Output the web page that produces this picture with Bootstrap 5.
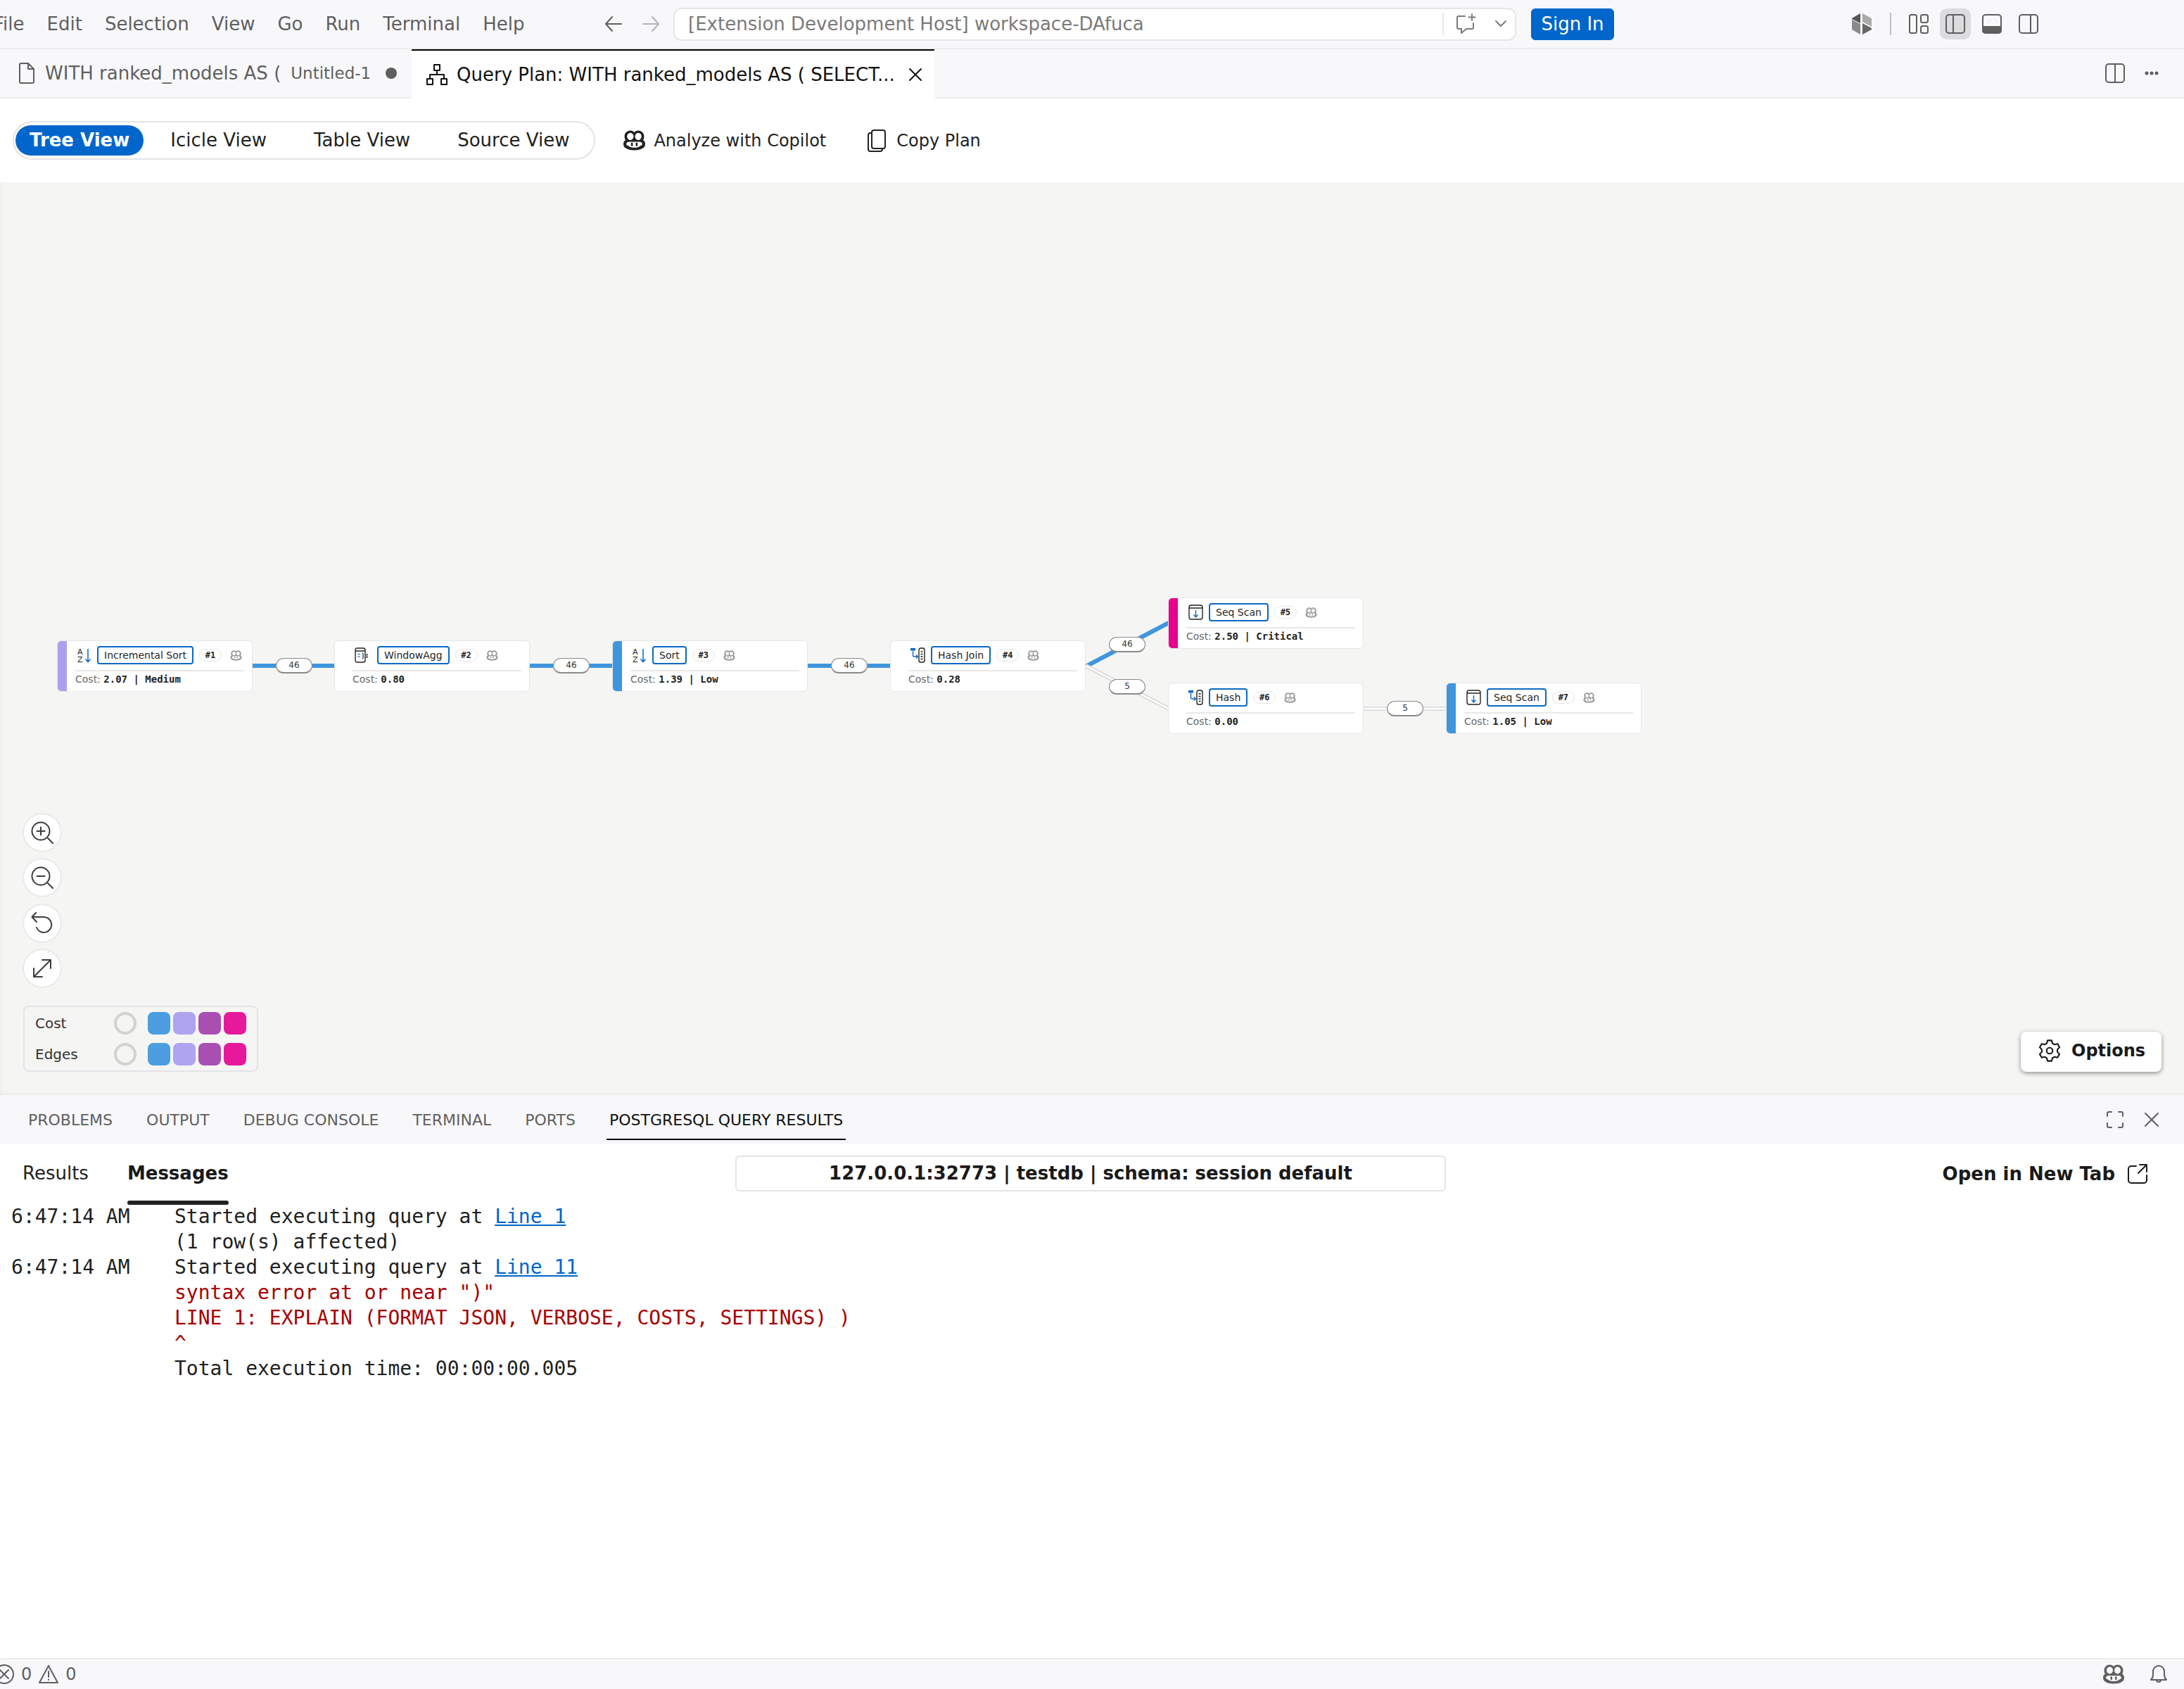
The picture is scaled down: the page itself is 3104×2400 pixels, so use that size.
<!DOCTYPE html>
<html lang="en">
<head>
<meta charset="UTF-8" />
<title>Query Plan</title>
<link rel="stylesheet" href="https://cdn.jsdelivr.net/npm/bootstrap@5.3.2/dist/css/bootstrap.min.css" />
<style>
  html, body { height: 2400px; overflow: hidden; }
  body { font-family: "DejaVu Sans", sans-serif; font-size: 26px; color: #1f1f1f; background: #fff; }
  svg { display: block; flex: none; }
  .ico { fill: none; stroke: currentColor; stroke-width: 2; stroke-linecap: round; stroke-linejoin: round; }

  .app { height: 2400px; }
  .title-bar { height: 70px; background: #f8f8fb; border-bottom: 2px solid #ececee; color: #5f5f5f; flex: none; }
  .menu-list { margin-left: -9px; gap: 32px; width: 868px; }
  .nav-arrow { margin-right: 27px; }
  .nav-next { color: #b5b5b5; }
  .cmd-center { width: 1198px; height: 47px; margin-left: 19px; background: #fff; border: 2px solid #e6e6e8; border-radius: 12px; padding: 0 11px 0 19px; color: #7a7a7a; }
  .cmd-sep { width: 2px; height: 32px; background: #e6e6e8; margin-left: auto; margin-right: 16px; }
  .btn-signin { --bs-btn-padding-x: 0; --bs-btn-padding-y: 0; --bs-btn-font-size: 26px; --bs-btn-bg: #0066cc; --bs-btn-border-color: #0066cc; --bs-btn-color: #fff; --bs-btn-border-radius: 6px; width: 118px; height: 45px; margin-left: 21px; }
  .layout-icons { margin-left: 338px; }
  .lay-sep { width: 2px; height: 32px; background: #bdbdbd; margin: 0 25px 0 26px; }
  .lay-btn { width: 44px; height: 44px; border-radius: 10px; margin-right: 8px; }
  .lay-first { margin-left: -8px; }
  .lay-on { background: #dcdcde; }

  .tab-row { height: 70px; background: #f8f8fb; border-bottom: 2px solid #ececee; flex: none; }
  .ed-tab { height: 68px; color: #5f5f5f; white-space: nowrap; }
  .ed-tab-a { width: 585px; padding-left: 27px; }
  .ed-tab-a .tab-text { margin-left: 15px; }
  .tab-sub { font-size: 23px; margin-left: 14px; }
  .tab-dot { width: 16px; height: 16px; border-radius: 50%; background: #5f5f5f; margin-left: 21px; }
  .ed-tab-b { width: 743px; height: 70px; padding-left: 21px; background: #fff; border-top: 2px solid #000; color: #111; }
  .ed-tab-b .tab-text { margin-left: 13px; }
  .tab-close { margin-left: 19px; }
  .tab-actions { margin-left: auto; margin-right: 36px; color: #5f5f5f; gap: 28px; }

  .tool-bar { height: 119px; flex: none; padding-left: 18px; background: #fff; }
  .view-pills { height: 55px; border: 2px solid #e4e4e4; border-radius: 28px; padding: 0 15px 0 2px; gap: 27px; }
  .view-pill { padding: 0 20px; color: #1f1f1f; white-space: nowrap; }
  .view-on { height: 43px; border-radius: 22px; background: #0066cc; color: #fff; font-weight: 700; margin-right: -9px; }
  .tool-act { color: #222; white-space: nowrap; gap: 11px; font-size: 24px; }
  .act-one { margin-left: 39px; }
  .act-two { margin-left: 59px; gap: 15px; }

  .plan-canvas { height: 1297px; flex: none; background: #f5f5f3; box-shadow: inset 0 -6px 6px -6px rgba(0,0,0,.08), inset 6px 0 6px -6px rgba(0,0,0,.06); }
  .edge-layer { position: absolute; left: 0; top: -1px; }
  .plan-node { position: absolute; width: 278px; height: 73px; background: #fff; border: 1px solid #e6e6e6; border-radius: 6px; overflow: hidden; display: flex; }
  .n1 { left: 81px; top: 651px; }
  .n2 { left: 475px; top: 651px; }
  .n3 { left: 870px; top: 651px; }
  .n4 { left: 1265px; top: 651px; }
  .n5 { left: 1660px; top: 590px; }
  .n6 { left: 1660px; top: 711px; }
  .n7 { left: 2055px; top: 711px; }
  .cost-bar { width: 13px; flex: none; }
  .bar-low { background: #3f96dd; }
  .bar-med { background: #aaa0ee; }
  .bar-crit { background: #e6008c; }
  .node-body { flex: 1; padding: 7px 11px 0 12px; min-width: 0; }
  .node-head { height: 33px; padding-left: 3px; padding-bottom: 7px; gap: 8px; }
  .node-head svg.kind { color: #222; }
  .op-label { height: 26px; padding: 0 8px; border: 2px solid #0a69c6; border-radius: 4px; font-size: 14px; line-height: 22px; color: #1f1f1f; white-space: nowrap; }
  .id-pill { width: 32px; height: 18px; border: 1px solid #e6e6e6; border-radius: 9px; font: 700 12px/16px "DejaVu Sans Mono", monospace; color: #222; text-align: center; }
  .node-copilot { color: #999; margin-left: 4px; }
  .node-cost { border-top: 2px solid #e8e8e8; margin-top: 1px; padding-top: 1px; font-size: 14px; line-height: 20px; color: #666; white-space: nowrap; }
  .node-cost b { font: 700 14px/20px "DejaVu Sans Mono", monospace; color: #222; }

  .edge-pill { position: absolute; width: 52px; height: 22px; background: #fff; border: 1px solid #8a8a8a; border-bottom-width: 2px; border-radius: 11px; font-size: 12px; line-height: 19px; text-align: center; color: #333; }
  .p1 { left: 392px; top: 676px; }
  .p2 { left: 786px; top: 676px; }
  .p3 { left: 1181px; top: 676px; }
  .p4 { left: 1576px; top: 646px; }
  .p5 { left: 1576px; top: 706px; }
  .p6 { left: 1971px; top: 737px; }

  .zoom-stack { position: absolute; left: 34px; top: 898px; gap: 12.3px; }
  .zoom-btn { width: 52px; height: 52px; border-radius: 50%; background: #fff; box-shadow: 0 0 3px rgba(0,0,0,.18); color: #3c3c3c; }
  .legend-box { position: absolute; left: 33px; top: 1170px; width: 334px; height: 94px; border: 2px solid #e4e4e8; border-radius: 8px; padding: 7px 5px 0 15px; font-size: 20px; color: #333; gap: 12px; }
  .legend-row { height: 32px; }
  .legend-name { width: 112px; }
  .legend-radio { width: 32px; height: 32px; border: 4px solid #d2d2d2; border-radius: 50%; margin-right: 16px; }
  .swatch { width: 32px; height: 32px; border-radius: 8px; margin-right: 4px; }
  .sw-1 { background: #4c9ee0; }
  .sw-2 { background: #aea4f0; }
  .sw-3 { background: #a94fb2; }
  .sw-4 { background: #e6199a; }
  .options-btn { position: absolute; left: 2872px; top: 1207px; width: 200px; height: 57px; background: #fff; border-radius: 8px; box-shadow: 0 2px 6px rgba(0,0,0,.42); font-size: 24px; font-weight: 700; color: #1a1a1a; padding: 0 0 3px 24px; gap: 14px; }

  .panel-bar { height: 70px; flex: none; background: #f8f8fb; padding-left: 40px; font-size: 22px; color: #5f5f5f; gap: 48px; }
  .panel-tab { white-space: nowrap; }
  .panel-on { color: #111; box-shadow: 0 2px 0 0 #000; padding: 0 4px 10px; margin: 10px -4px 0; }
  .panel-right { margin-left: auto; margin-right: 36px; gap: 30px; }

  .results-bar { height: 84px; flex: none; padding-left: 32px; }
  .res-tab { height: 84px; line-height: 82px; white-space: nowrap; color: #222; }
  .res-on { font-weight: 700; margin-left: 55px; position: relative; color: #1a1a1a; }
  .res-on::after { content: ""; position: absolute; left: 0; right: 0; bottom: -2px; height: 6px; border-radius: 3px; background: #222; }
  .server-box { position: absolute; left: 1045px; top: 16px; width: 1010px; height: 51px; border: 2px solid #e4e4e4; border-radius: 6px; font-weight: 700; color: #1a1a1a; white-space: nowrap; }
  .new-tab { margin-left: auto; margin-right: 52px; font-weight: 700; color: #1a1a1a; gap: 18px; white-space: nowrap; }

  .msg-list { padding: 1px 0 0 16px; font: 28px/36px "DejaVu Sans Mono", monospace; color: #1f1f1f; flex: 1; }
  .msg-time { width: 232px; flex: none; }
  .msg-err { color: #a80000; }
  .msg-list a { color: #0066cc; }

  .status-bar { height: 44px; flex: none; background: #f8f8fb; border-top: 2px solid #ececee; color: #5f5f5f; font-size: 24px; }
  .status-left { margin-left: -8px; gap: 10px; }
  .status-right { margin-left: auto; margin-right: 24px; gap: 36px; }
</style>
</head>
<body>
<svg class="d-none" xmlns="http://www.w3.org/2000/svg">
  <symbol id="copilot" viewBox="0 0 32 28">
    <path fill="currentColor" fill-rule="evenodd" d="M16 27.500c-6 0-10-1-12-3-2-1-3-3-3-6 0-2 1-4 3-5-1-1-1.500-2.500-1.500-5C2.500 4 6 .5 10.500 .5c2.500 0 4.500 1 5.500 2.500 1-1.500 3-2.500 5.500-2.500C26 .5 29.500 4 29.500 8.500c0 2.500-.5 4-1.500 5 2 1 3 3 3 5 0 3-1 5-3 6-2 2-6 3-12 3zM6 8.500a4.500 5 0 1 0 9 0a4.500 5 0 1 0-9 0zM17 8.500a4.500 5 0 1 0 9 0a4.500 5 0 1 0-9 0zM9 16h14c2 0 4 1 4 3 0 1-1 2-2 2-2 2-5 3-9 3s-7-1-9-3c-1 0-2-1-2-2 0-2 2-3 4-3z"/>
    <rect x="11.500" y="17" width="2.500" height="5" rx="1.200" fill="currentColor"/>
    <rect x="18" y="17" width="2.500" height="5" rx="1.200" fill="currentColor"/>
  </symbol>
  <symbol id="sort-az" viewBox="0 0 20 21">
    <text x="0" y="9" font-family="DejaVu Sans, sans-serif" font-size="11" fill="#222">A</text>
    <text x="0" y="20" font-family="DejaVu Sans, sans-serif" font-size="11" fill="#222">Z</text>
    <path d="M15 1v18M11.500 15.500 15 19.500l3.500-4" fill="none" stroke="#0a69c6" stroke-width="1.500"/>
  </symbol>
  <symbol id="win-agg" viewBox="0 0 20 22">
    <rect x="1" y="1" width="14" height="20" rx="2.500" fill="none" stroke="#222" stroke-width="1.400"/>
    <path d="M1 5h14" stroke="#222" stroke-width="1.400"/>
    <path d="M4 9.500h4M4 13h4" stroke="#0a69c6" stroke-width="1.200"/>
    <path d="M11 8c1.500 0 1 2 1 3 0 1 1 1 1 1s-1 0-1 1c0 1 .5 3-1 3" fill="none" stroke="#222" stroke-width="1.200"/>
    <path d="M16 10h3M16 14h3M17.500 10v4" stroke="#222" stroke-width="1"/>
  </symbol>
  <symbol id="hash-op" viewBox="0 0 21 22">
    <rect x="0" y="1" width="7" height="3.500" fill="#0a69c6"/>
    <path d="M3.500 5v6c0 1 1 2 2 2h5M8 10.500l2.500 2.500L8 15.500" fill="none" stroke="#0a69c6" stroke-width="1.400"/>
    <rect x="12" y="1" width="8" height="20" rx="2.500" fill="none" stroke="#222" stroke-width="1.400"/>
    <path d="M14.500 6h3M14.500 9.500h3M14.500 13h3M14.500 16.500h3" stroke="#222" stroke-width="1.300"/>
  </symbol>
  <symbol id="seq-scan" viewBox="0 0 21 22">
    <rect x="1" y="1" width="19" height="20" rx="3" fill="none" stroke="#222" stroke-width="1.400"/>
    <path d="M1 5h19" stroke="#222" stroke-width="1.400"/>
    <path d="M10.500 8v10M7.500 14.500l3 3.500 3-3.500" fill="none" stroke="#0a69c6" stroke-width="1.400"/>
  </symbol>
</svg>

<div class="app d-flex flex-column">
  <!-- title bar -->
  <header class="title-bar d-flex align-items-center">
    <div class="menu-list d-flex">
      <span>File</span><span>Edit</span><span>Selection</span><span>View</span><span>Go</span><span>Run</span><span>Terminal</span><span>Help</span>
    </div>
    <svg class="ico nav-arrow" width="26" height="28" viewBox="0 0 26 28"><path d="M24 14H2M11 4 2 14l9 10"/></svg>
    <svg class="ico nav-next" width="26" height="28" viewBox="0 0 26 28"><path d="M2 14h22M15 4l9 10-9 10"/></svg>
    <div class="cmd-center d-flex align-items-center">
      <span>[Extension Development Host] workspace-DAfuca</span>
      <span class="cmd-sep"></span>
      <svg class="ico" width="32" height="30" viewBox="0 0 32 30"><path d="M14 4H5a2 2 0 0 0-2 2v14a2 2 0 0 0 2 2h4v6l7-6h8a2 2 0 0 0 2-2v-6"/><path d="M24 1v9M19.500 5.500h9" stroke-width="1.800"/></svg>
      <svg class="ico ms-4" width="18" height="12" viewBox="0 0 18 12"><path d="m2 2 7 7 7-7"/></svg>
    </div>
    <button type="button" class="btn btn-signin">Sign In</button>
    <div class="layout-icons d-flex align-items-center">
      <svg width="28" height="30" viewBox="0 0 28 30"><polygon points="0,7 12,0 12,14 0,8" fill="#555"/><polygon points="0,9 12,15 12,30 0,23" fill="#8a8a8a"/><polygon points="15,0 28,7 28,19 15,12" fill="#aaa"/><polygon points="15,14 28,21 28,23 15,30" fill="#666"/></svg>
      <span class="lay-sep"></span>
      <span class="lay-btn lay-first d-flex align-items-center justify-content-center">
        <svg class="ico" width="28" height="28" viewBox="0 0 28 28"><rect x="1" y="1" width="10" height="26" rx="2.500"/><rect x="17" y="1" width="10" height="11" rx="2.500"/><rect x="17" y="17" width="10" height="10" rx="2.500"/></svg>
      </span>
      <span class="lay-btn lay-on d-flex align-items-center justify-content-center">
        <svg class="ico" width="28" height="28" viewBox="0 0 28 28"><rect x="1" y="1" width="26" height="26" rx="4"/><path d="M11 1v26"/></svg>
      </span>
      <span class="lay-btn d-flex align-items-center justify-content-center">
        <svg class="ico" width="28" height="28" viewBox="0 0 28 28"><rect x="1" y="1" width="26" height="26" rx="4"/><path d="M1 18h26v5a4 4 0 0 1-4 4H5a4 4 0 0 1-4-4z" fill="currentColor"/></svg>
      </span>
      <span class="lay-btn d-flex align-items-center justify-content-center">
        <svg class="ico" width="28" height="28" viewBox="0 0 28 28"><rect x="1" y="1" width="26" height="26" rx="4"/><path d="M17 1v26"/></svg>
      </span>
    </div>
  </header>

  <!-- editor tabs -->
  <div class="tab-row d-flex align-items-start">
    <div class="ed-tab ed-tab-a d-flex align-items-center">
      <svg class="ico" width="22" height="30" viewBox="0 0 22 30"><path d="M3 1h10l8 8v18a2 2 0 0 1-2 2H3a2 2 0 0 1-2-2V3a2 2 0 0 1 2-2zM13 1v8h8"/></svg>
      <span class="tab-text">WITH ranked_models AS (</span>
      <span class="tab-sub">Untitled-1</span>
      <span class="tab-dot"></span>
    </div>
    <div class="ed-tab ed-tab-b d-flex align-items-center">
      <svg class="ico" width="30" height="30" viewBox="0 0 30 30"><rect x="11" y="1" width="8" height="8"/><rect x="1" y="21" width="8" height="8"/><rect x="21" y="21" width="8" height="8"/><path d="M15 9v6M5 21v-6h20v6"/></svg>
      <span class="tab-text">Query Plan: WITH ranked_models AS ( SELECT...</span>
      <svg class="ico tab-close" width="20" height="20" viewBox="0 0 20 20"><path d="m2 2 16 16M18 2 2 18"/></svg>
    </div>
    <div class="tab-actions d-flex align-items-center align-self-center">
      <svg class="ico" width="28" height="28" viewBox="0 0 28 28"><rect x="1" y="1" width="26" height="26" rx="4"/><path d="M14 1v26"/></svg>
      <svg width="20" height="6" viewBox="0 0 20 6" fill="currentColor"><circle cx="3" cy="3" r="2.500"/><circle cx="10" cy="3" r="2.500"/><circle cx="17" cy="3" r="2.500"/></svg>
    </div>
  </div>

  <!-- view switch -->
  <div class="tool-bar d-flex align-items-center">
    <div class="view-pills d-flex align-items-center">
      <span class="view-pill view-on d-flex align-items-center">Tree View</span>
      <span class="view-pill">Icicle View</span>
      <span class="view-pill">Table View</span>
      <span class="view-pill">Source View</span>
    </div>
    <span class="tool-act act-one d-flex align-items-center"><svg width="33" height="29"><use href="#copilot"/></svg>Analyze with Copilot</span>
    <span class="tool-act act-two d-flex align-items-center">
      <svg class="ico" width="26" height="32" viewBox="0 0 26 32"><rect x="6" y="1" width="19" height="26" rx="3"/><path d="M6 5H4a3 3 0 0 0-3 3v20a3 3 0 0 0 3 3h14a3 3 0 0 0 3-3v-1"/></svg>
      Copy Plan
    </span>
  </div>

  <!-- plan diagram -->
  <main class="plan-canvas position-relative">
    <svg class="edge-layer" width="3104" height="1298" viewBox="0 0 3104 1298">
      <g stroke="#3f96dd" stroke-width="6">
        <path d="M358 688H476M753 688H871M1148 688H1266"/>
        <path d="M1543 689 1661 627"/>
      </g>
      <g stroke="#dcdcdc" stroke-width="6">
        <path d="M1543 688 1661 749M1938 749H2056"/>
      </g>
      <g stroke="#fff" stroke-width="2.500">
        <path d="M1543 688 1661 749M1938 749H2056"/>
      </g>
    </svg>

    <div class="plan-node n1">
      <span class="cost-bar bar-med"></span>
      <div class="node-body">
        <div class="node-head d-flex align-items-center">
          <svg class="kind" width="20" height="21"><use href="#sort-az"/></svg>
          <span class="op-label">Incremental Sort</span>
          <span class="id-pill">#1</span>
          <svg class="node-copilot" width="17" height="15"><use href="#copilot"/></svg>
        </div>
        <div class="node-cost">Cost: <b>2.07 | Medium</b></div>
      </div>
    </div>
    <div class="plan-node n2">
      <span class="cost-bar"></span>
      <div class="node-body">
        <div class="node-head d-flex align-items-center">
          <svg class="kind" width="20" height="22"><use href="#win-agg"/></svg>
          <span class="op-label ms-1">WindowAgg</span>
          <span class="id-pill">#2</span>
          <svg class="node-copilot" width="17" height="15"><use href="#copilot"/></svg>
        </div>
        <div class="node-cost">Cost: <b>0.80</b></div>
      </div>
    </div>
    <div class="plan-node n3">
      <span class="cost-bar bar-low"></span>
      <div class="node-body">
        <div class="node-head d-flex align-items-center">
          <svg class="kind" width="20" height="21"><use href="#sort-az"/></svg>
          <span class="op-label">Sort</span>
          <span class="id-pill">#3</span>
          <svg class="node-copilot" width="17" height="15"><use href="#copilot"/></svg>
        </div>
        <div class="node-cost">Cost: <b>1.39 | Low</b></div>
      </div>
    </div>
    <div class="plan-node n4">
      <span class="cost-bar"></span>
      <div class="node-body">
        <div class="node-head d-flex align-items-center">
          <svg class="kind" width="21" height="22"><use href="#hash-op"/></svg>
          <span class="op-label">Hash Join</span>
          <span class="id-pill">#4</span>
          <svg class="node-copilot" width="17" height="15"><use href="#copilot"/></svg>
        </div>
        <div class="node-cost">Cost: <b>0.28</b></div>
      </div>
    </div>
    <div class="plan-node n5">
      <span class="cost-bar bar-crit"></span>
      <div class="node-body">
        <div class="node-head d-flex align-items-center">
          <svg class="kind" width="21" height="22"><use href="#seq-scan"/></svg>
          <span class="op-label">Seq Scan</span>
          <span class="id-pill">#5</span>
          <svg class="node-copilot" width="17" height="15"><use href="#copilot"/></svg>
        </div>
        <div class="node-cost">Cost: <b>2.50 | Critical</b></div>
      </div>
    </div>
    <div class="plan-node n6">
      <span class="cost-bar"></span>
      <div class="node-body">
        <div class="node-head d-flex align-items-center">
          <svg class="kind" width="21" height="22"><use href="#hash-op"/></svg>
          <span class="op-label">Hash</span>
          <span class="id-pill">#6</span>
          <svg class="node-copilot" width="17" height="15"><use href="#copilot"/></svg>
        </div>
        <div class="node-cost">Cost: <b>0.00</b></div>
      </div>
    </div>
    <div class="plan-node n7">
      <span class="cost-bar bar-low"></span>
      <div class="node-body">
        <div class="node-head d-flex align-items-center">
          <svg class="kind" width="21" height="22"><use href="#seq-scan"/></svg>
          <span class="op-label">Seq Scan</span>
          <span class="id-pill">#7</span>
          <svg class="node-copilot" width="17" height="15"><use href="#copilot"/></svg>
        </div>
        <div class="node-cost">Cost: <b>1.05 | Low</b></div>
      </div>
    </div>

    <span class="edge-pill p1">46</span>
    <span class="edge-pill p2">46</span>
    <span class="edge-pill p3">46</span>
    <span class="edge-pill p4">46</span>
    <span class="edge-pill p5">5</span>
    <span class="edge-pill p6">5</span>

    <div class="zoom-stack d-flex flex-column">
      <span class="zoom-btn d-flex align-items-center justify-content-center">
        <svg class="ico" width="32" height="32" viewBox="0 0 32 32"><circle cx="14" cy="14" r="12.500"/><path d="M24 24l7 7M8.500 14h11M14 8.500v11"/></svg>
      </span>
      <span class="zoom-btn d-flex align-items-center justify-content-center">
        <svg class="ico" width="32" height="32" viewBox="0 0 32 32"><circle cx="14" cy="14" r="12.500"/><path d="M24 24l7 7M8.500 14h11"/></svg>
      </span>
      <span class="zoom-btn d-flex align-items-center justify-content-center">
        <svg class="ico" width="32" height="32" viewBox="0 0 32 32"><path d="M2 7h16a11 11 0 1 1-10 15M7 1 1.500 7 8 14"/></svg>
      </span>
      <span class="zoom-btn d-flex align-items-center justify-content-center">
        <svg class="ico" width="32" height="32" viewBox="0 0 32 32"><path d="M4 28 28 4M4 16v12h12M16 4h12v12"/></svg>
      </span>
    </div>

    <div class="legend-box d-flex flex-column">
      <div class="legend-row d-flex align-items-center">
        <span class="legend-name">Cost</span><span class="legend-radio"></span>
        <span class="swatch sw-1"></span><span class="swatch sw-2"></span><span class="swatch sw-3"></span><span class="swatch sw-4"></span>
      </div>
      <div class="legend-row d-flex align-items-center">
        <span class="legend-name">Edges</span><span class="legend-radio"></span>
        <span class="swatch sw-1"></span><span class="swatch sw-2"></span><span class="swatch sw-3"></span><span class="swatch sw-4"></span>
      </div>
    </div>

    <div class="options-btn d-flex align-items-center">
      <svg class="ico" width="34" height="34" viewBox="0 0 32 32"><path d="M12.100 6.300 13.300 2.250H18.700L19.900 6.300 22.500 7.700 26.600 6.800 29.200 11.400 26.400 14.500V17.500L29.200 20.600 26.600 25.200 22.500 24.300 19.900 25.700 18.700 29.750H13.300L12.100 25.700 9.500 24.300 5.400 25.200 2.800 20.600 5.600 17.500V14.500L2.800 11.400 5.400 6.800 9.500 7.700z"/><circle cx="16" cy="16" r="4"/></svg>
      Options
    </div>
  </main>

  <!-- bottom panel -->
  <div class="panel-bar d-flex align-items-center">
    <span class="panel-tab">PROBLEMS</span>
    <span class="panel-tab">OUTPUT</span>
    <span class="panel-tab">DEBUG CONSOLE</span>
    <span class="panel-tab">TERMINAL</span>
    <span class="panel-tab">PORTS</span>
    <span class="panel-tab panel-on">POSTGRESQL QUERY RESULTS</span>
    <div class="panel-right d-flex align-items-center">
      <svg class="ico" width="24" height="24" viewBox="0 0 24 24"><path d="M1 7V3a2 2 0 0 1 2-2h4M17 1h4a2 2 0 0 1 2 2v4M23 17v4a2 2 0 0 1-2 2h-4M7 23H3a2 2 0 0 1-2-2v-4"/></svg>
      <svg class="ico" width="20" height="20" viewBox="0 0 20 20"><path d="m1 1 18 18M19 1 1 19"/></svg>
    </div>
  </div>

  <div class="results-bar d-flex align-items-center position-relative">
    <span class="res-tab">Results</span>
    <span class="res-tab res-on">Messages</span>
    <div class="server-box d-flex align-items-center justify-content-center">127.0.0.1:32773 | testdb | schema: session default</div>
    <span class="new-tab d-flex align-items-center">Open in New Tab
      <svg class="ico" width="28" height="28" viewBox="0 0 28 28"><path d="M12 3H5a4 4 0 0 0-4 4v16a4 4 0 0 0 4 4h18a4 4 0 0 0 4-4v-7M17 1h10v10M27 1 15 13"/></svg>
    </span>
  </div>

  <div class="msg-list">
    <div class="d-flex"><span class="msg-time">6:47:14 AM</span><div>Started executing query at <a href="#">Line 1</a><br />(1 row(s) affected)</div></div>
    <div class="d-flex"><span class="msg-time">6:47:14 AM</span><div>Started executing query at <a href="#">Line 11</a><br /><span class="msg-err">syntax error at or near ")"<br />LINE 1: EXPLAIN (FORMAT JSON, VERBOSE, COSTS, SETTINGS) )<br />^</span><br />Total execution time: 00:00:00.005</div></div>
  </div>

  <footer class="status-bar d-flex align-items-center">
    <div class="status-left d-flex align-items-center">
      <svg class="ico" width="28" height="28" viewBox="0 0 28 28"><circle cx="14" cy="14" r="13"/><path d="m8 8 12 12M20 8 8 20"/></svg>
      <span>0</span>
      <svg class="ico" width="28" height="26" viewBox="0 0 28 26"><path d="M14 1 1 25h26zM14 9v8M14 20.500v.5"/></svg>
      <span>0</span>
    </div>
    <div class="status-right d-flex align-items-center">
      <svg width="32" height="28"><use href="#copilot"/></svg>
      <svg class="ico" width="24" height="28" viewBox="0 0 24 28"><path d="M1 22h22c-2-2-3-4-3-7V10a8 8 0 0 0-16 0v5c0 3-1 5-3 7zM9 22a3 3 0 0 0 6 0"/></svg>
    </div>
  </footer>
</div>
</body>
</html>
